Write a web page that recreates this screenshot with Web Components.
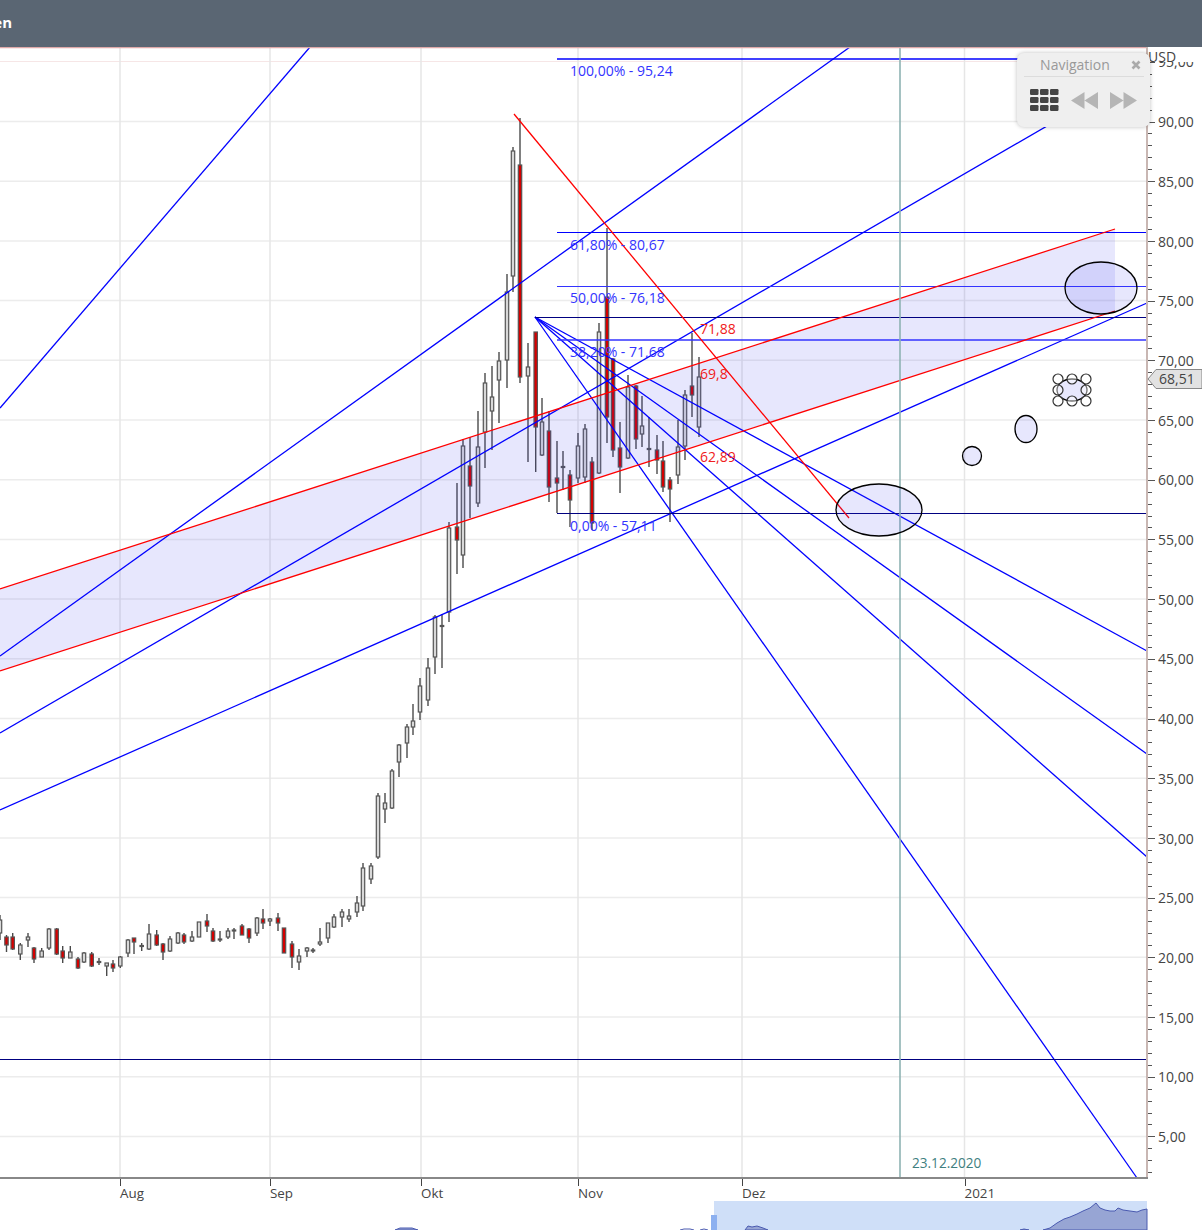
<!DOCTYPE html>
<html>
<head>
<meta charset="utf-8">
<title>Chart</title>
<style>
  html, body { margin: 0; padding: 0; background: #fff; overflow: hidden; }
  body { font-family: "Open Sans", "Liberation Sans", sans-serif; }
</style>
</head>
<body>
<chart-app>
  <chart-header slot="header">en</chart-header>
  <price-chart slot="chart"></price-chart>
  <mini-map slot="overview"></mini-map>
</chart-app>

<script>
class ChartApp extends HTMLElement {
  constructor() {
    super();
    this.attachShadow({ mode: "open" }).innerHTML = `
      <style>
        :host { display: flex; flex-direction: column; width: 1202px; height: 1230px; overflow: hidden; }
      </style>
      <slot name="header"></slot>
      <slot name="chart"></slot>
      <slot name="overview"></slot>
    `;
  }
}

class ChartHeader extends HTMLElement {
  constructor() {
    super();
    this.attachShadow({ mode: "open" }).innerHTML = `
      <style>
        :host {
          display: flex;
          align-items: center;
          justify-content: flex-end;
          width: 12px;
          height: 44px;
          padding: 0 1190px 3px 0;
          box-sizing: content-box;
          background: #5a6673;
          color: #fff;
          font: bold 15px "Open Sans", sans-serif;
          overflow: hidden;
          white-space: nowrap;
        }
      </style>
      <slot></slot>
    `;
  }
}

class NavPanel extends HTMLElement {
  constructor() {
    super();
    this.attachShadow({ mode: "open" }).innerHTML = `
      <style>
        :host {
          display: block;
          position: absolute;
          left: 1017px;
          top: 6px;
          width: 133px;
          height: 74px;
          box-sizing: border-box;
          padding: 0 6px 0 7px;
          background: #efefef;
          border-radius: 7px;
          box-shadow: 0 0 4px rgba(0,0,0,.25);
          color: #999;
          font: 14px "Open Sans", sans-serif;
        }
        .title {
          display: flex;
          align-items: center;
          height: 23px;
          border-bottom: 1px solid #dcdcdc;
        }
        .title span { flex: 1; text-align: center; padding-right: 5px; }
        .title svg { margin-right: 3px; }
        .tools { display: flex; align-items: center; height: 47px; padding-left: 6px; gap: 12px; }
      </style>
      <div class="title">
        <span>Navigation</span>
        <svg width="10" height="10" viewBox="0 0 10 10"><path d="M1.5 1.5 8.5 8.5M8.5 1.5 1.5 8.5" stroke="#aaa" stroke-width="2.6"/></svg>
      </div>
      <div class="tools">
        <svg width="29" height="23" viewBox="0 0 29 23" fill="#444">
          <rect x="0" y="0" width="8.5" height="6" rx="1.2"/><rect x="10" y="0" width="8.5" height="6" rx="1.2"/><rect x="20" y="0" width="8.5" height="6" rx="1.2"/>
          <rect x="0" y="8" width="8.5" height="6" rx="1.2"/><rect x="10" y="8" width="8.5" height="6" rx="1.2"/><rect x="20" y="8" width="8.5" height="6" rx="1.2"/>
          <rect x="0" y="16" width="8.5" height="6" rx="1.2"/><rect x="10" y="16" width="8.5" height="6" rx="1.2"/><rect x="20" y="16" width="8.5" height="6" rx="1.2"/>
        </svg>
        <svg width="27" height="17" viewBox="0 0 27 17" fill="#b5b5b5"><path d="M0 8.5 13.5 0V17ZM13.5 8.5 27 0V17Z"/></svg>
        <svg width="27" height="17" viewBox="0 0 27 17" fill="#b5b5b5"><path d="M0 0 13.5 8.5 0 17ZM13.5 0 27 8.5 13.5 17Z"/></svg>
      </div>
    `;
  }
}

// x, wick top, wick bottom, body top, body bottom, falling
const CANDLES = [
  [0,915,940,920,933,0],[6.5,935,952,937,945,1],[12.7,933,950,937,949,1],[20.3,943,960,945,954,0],
  [28,933,947,937,940,0],[34,947,963,948,959,1],[41.7,948,957,951,957,0],[49,928,950,929,948,0],
  [56.7,928,955,929,954,1],[62.7,946,963,951,958,1],[70.3,946,958,952,958,0],[78,957,969,959,968,1],
  [84,952,963,953,962,0],[91.7,952,967,954,966,1],[99,958,965,961.5,962.5,0],[106.7,963,976,963,966,0],
  [113,960,972,964,968,1],[120.3,956,968,957,966,0],[128,939,957,940,953,0],[134,938,954,938,942,1],
  [141.7,943,951,945.5,946.5,0],[149,924,950,934,949,0],[156.7,930,946,935,945,1],[163,943,960,944,952,1],
  [170,936,952,939,951,0],[178,932,944,933,943,0],[184,933,944,935,942,1],[192,931,942,937,941,0],
  [199,922,937,922,937,0],[207,914,932,921,926,1],[213,928,942,931,941,1],[220,931,942,939,940,0],
  [228,928,939,931,937,0],[234,928,939,930,931,0],[242,924,935,926,935,1],[249,928,943,929,938,1],
  [257,917,936,918,933,0],[263,909,929,919,923,1],[270,918,926,919,921,0],[278,913,931,918,923,1],
  [284,928,953,928,953,1],[292,941,968,944,957,1],[299,949,970,956,962,0],[307,947,957,948,951,0],
  [313,948,953,950,951,0],[320,928,946,942,944,0],[328,923,943,923,938,0],[334,914,928,917,927,0],
  [342,909,927,912,917,0],[349,909,922,916,919,0],[357,896,917,903,912,0],[363,863,911,868,906,0],
  [371,863,884,866,879,0],[378,793,859,796,857,0],[385,793,823,803,809,0],[392,769,809,771,808,0],
  [399,744,777,745,762,0],[407,724,758,727,743,0],[413,704,735,721,727,0],[420,678,720,686,712,0],
  [428,658,706,668,700,0],[435,615,674,617,657,0],[442,614,668,625.5,626.5,0],[449,522,622,528,612,0],
  [457,483,574,527,540,1],[463,439,568,446,555,0],[470,437,518,466,486,1],[478,411,507,447,503,0],
  [485,373,468,383,432,0],[492,366,450,397,411,0],[499,352,423,361,380,0],[507,274,388,292,360,0],
  [513,147,292,151,276,0],[520,118,383,165,377,1],[528,343,462,367,376,0],[535.7,332,472,332,427,1],
  [542,398,456,422,455,0],[549,411,502,431,487,1],[557,441,513,478,483,1],[563,451,490,466.5,467.5,0],
  [570,470,527,475,500,1],[578,433,483,446,478,0],[585,424,483,429,477,0],[592,457,530,462,523,1],
  [599,323,474,332,473,0],[607,228,443,297,417,1],[613,358,457,359,450,1],[620,422,493,448,467,1],
  [628,375,459,387,458,0],[636,385,449,386,439,1],[642,396,447,426,434,0],[649,417,467,448.5,449.5,0],
  [657,435,474,450,460,1],[663,441,492,461,487,1],[670,477,522,480,489,1],[678,420,484,447,475,0],
  [685,390,460,395,446,0],[692,333,417,386,395,1],[699,357,437,377,427,0]
];

const PRICE_LABELS = ["90,00","85,00","80,00","75,00","70,00","65,00","60,00","55,00","50,00","45,00",
  "40,00","35,00","30,00","25,00","20,00","15,00","10,00","5,00"];
const MONTHS = [["Aug",120],["Sep",270],["Okt",421],["Nov",578],["Dez",742],["2021",964.5]];
const UNIT = 11.94;
const Y90 = 121.5;

function line(x1, y1, x2, y2, color, w) {
  return `<line x1="${x1}" y1="${y1}" x2="${x2}" y2="${y2}" stroke="${color}" stroke-width="${w || 1}"/>`;
}

class PriceChart extends HTMLElement {
  constructor() {
    super();
    this.attachShadow({ mode: "open" }).innerHTML = `
      <style>
        :host { display: block; position: relative; width: 1202px; height: 1154px; flex: none; }
        svg { display: block; }
        text { font: 14px "Open Sans", "Liberation Sans", sans-serif; }
        .axis { fill: #444; }
        .month { font-size: 13.4px; }
        .fib { fill: #3333ff; }
        .red { fill: #f02020; }
      </style>
      <svg width="1202" height="1154" viewBox="0 47 1202 1154"></svg>
      <nav-panel></nav-panel>
    `;
    this.shadowRoot.querySelector("svg").innerHTML = this.grid() + this.candles() + this.drawings() + this.axes();
  }

  grid() {
    let s = line(0, 61.5, 1147, 61.5, "#f6e6e6");
    PRICE_LABELS.forEach((_, i) => {
      const y = Y90 + i * UNIT * 5;
      s += line(0, y, 1147, y, "#ececec", 1.5);
    });
    MONTHS.forEach(([, x]) => { s += line(x, 48, x, 1178, "#e6e6e6", 1.5); });
    return s;
  }

  candles() {
    return CANDLES.map(([x, wt, wb, bt, bb, down]) =>
      line(x, wt, x, wb, "#4a4a4a", 1.4) +
      `<rect x="${x - 1.7}" y="${bt}" width="3.4" height="${bb - bt}" fill="${down ? "#d40000" : "#d8d8d8"}" stroke="#555" stroke-width="1.2"/>`
    ).join("");
  }

  drawings() {
    const blue = "#0000ff", navy = "#000080", red = "#ff0000";
    const w = 1.3;
    const ellipse = (cx, cy, rx, ry) =>
      `<ellipse cx="${cx}" cy="${cy}" rx="${rx}" ry="${ry}" fill="rgba(60,60,240,.12)" stroke="#000" stroke-width="1.3"/>`;
    const grips = [[1058,379],[1072,379],[1086,379],[1058,390],[1086,390],[1058,401],[1072,401],[1086,401]];
    const fibs = [["100,00% - 95,24",76],["61,80% - 80,67",250],["50,00% - 76,18",303],["38,20% - 71,68",357],["0,00% - 57,11",531]];
    return `
      <polygon points="0,589 1115,229 1115,311 0,671" fill="rgba(60,60,240,.12)"/>
      ${line(0, 408, 310, 47, blue, w)}
      ${line(0, 656, 850, 47, blue, w)}
      ${line(0, 733, 1147, 68, blue, w)}
      ${line(0, 810, 1147, 303, blue, w)}
      ${line(535, 317, 1147, 651, blue, w)}
      ${line(535, 317, 1147, 754, blue, w)}
      ${line(535, 317, 1147, 857, blue, w)}
      ${line(535, 317, 1137, 1178, blue, w)}
      ${line(557, 59, 1147, 59, blue, w)}
      ${line(557, 232.5, 1147, 232.5, blue)}
      ${line(557, 286.5, 1147, 286.5, "#3333ff")}
      ${line(557, 340, 1147, 340, "#3333ff", w)}
      ${line(535, 317.5, 1147, 317.5, navy)}
      ${line(557, 513.5, 1147, 513.5, navy)}
      ${line(0, 1059.5, 1147, 1059.5, navy)}
      ${line(514, 114, 849, 518, red, w)}
      ${line(0, 589, 1115, 229, red, w)}
      ${line(0, 671, 1115, 311, red, w)}
      ${line(900, 48, 900, 1178, "#8fb3b3", 1.6)}
      ${ellipse(879, 510, 43, 26)}
      ${ellipse(1101, 288, 36, 26)}
      ${ellipse(972, 456, 9.5, 9.5)}
      ${ellipse(1026, 429, 11, 13.5)}
      ${ellipse(1072, 390, 15, 11)}
      ${grips.map(([x, y]) => `<circle cx="${x}" cy="${y}" r="5" fill="rgba(255,255,255,.45)" stroke="#333" stroke-width="1.2"/>`).join("")}
      ${fibs.map(([t, y]) => `<text class="fib" x="570" y="${y}">${t}</text>`).join("")}
      <text class="red" x="700" y="334">71,88</text>
      <text class="red" x="700" y="379">69,8</text>
      <text class="red" x="700" y="462">62,89</text>
      <text x="912" y="1168" fill="#3f7f7f" font-size="13.6" style="font-size:13.6px">23.12.2020</text>
    `;
  }

  axes() {
    let s = line(0, 47.5, 1147, 47.5, "#dfa9a9", 1.5);
    s += `<text class="axis" x="1158" y="67">95,00</text>`;
    s += `<rect x="1147" y="47" width="55" height="15" fill="#fff"/>`;
    s += line(1147, 47, 1147, 1178, "#c9b7b3", 2);
    s += line(0, 1178, 1148, 1178, "#888", 2);
    for (let i = -5; i * UNIT + Y90 < 1178; i++) {
      const y = Math.round(Y90 + i * UNIT) + 0.5;
      if (y < 62) continue;
      s += line(1148, y, i % 5 === 0 ? 1155 : 1152, y, "#555");
    }
    PRICE_LABELS.forEach((t, i) => {
      const y = Y90 + i * UNIT * 5;
      s += `<text class="axis" x="1158" y="${y + 5.6}">${t}</text>`;
    });
    MONTHS.forEach(([t, x]) => {
      s += line(Math.round(x) + 0.5, 1179, Math.round(x) + 0.5, 1186, "#444");
      s += `<text class="axis month" x="${x}" y="1198">${t}</text>`;
    });
    s += `<text class="axis" x="1148" y="62">USD</text>`;
    s += `<polygon points="1148,379 1156,369.5 1202,369.5 1202,388.5 1156,388.5" fill="#e2e2e2" stroke="#888"/>`;
    s += `<text class="axis" x="1159" y="384">68,51</text>`;
    return s;
  }
}

class MiniMap extends HTMLElement {
  constructor() {
    super();
    this.attachShadow({ mode: "open" }).innerHTML = `
      <style>
        :host { display: block; width: 1202px; height: 29px; flex: none; }
        svg { display: block; }
      </style>
      <svg width="1202" height="29" viewBox="0 1201 1202 29">
        <rect x="714" y="1201" width="433" height="29" fill="#cfdff8"/>
        <rect x="711" y="1215" width="6" height="15" fill="#8cb0f0"/>
        <path d="M395 1230 400 1228 412 1228 418 1230Z" fill="#97a5d4" stroke="#4a5ab0"/>
        <path d="M680 1230 684 1229 690 1229 694 1230M700 1230 704 1229 708 1230" fill="none" stroke="#4a5ab0"/>
        <path d="M745 1230 748 1226 752 1227 757 1226 763 1228 768 1230Z" fill="#97a5d4" stroke="#4a5ab0"/>
        <path d="M1020 1230 1024 1229 1029 1230Z" fill="#97a5d4" stroke="#4a5ab0"/>
        <path d="M1043 1230 1050 1228 1057 1223 1064 1219 1070 1217 1077 1214 1083 1211 1090 1208 1096 1203 1100 1208 1105 1210 1110 1211 1115 1211 1118 1208 1123 1210 1130 1211 1137 1212 1142 1210 1147 1209V1230Z" fill="#97a5d4" stroke="#4a5ab0"/>
      </svg>
    `;
  }
}

customElements.define("chart-app", ChartApp);
customElements.define("chart-header", ChartHeader);
customElements.define("nav-panel", NavPanel);
customElements.define("price-chart", PriceChart);
customElements.define("mini-map", MiniMap);
</script>
</body>
</html>
